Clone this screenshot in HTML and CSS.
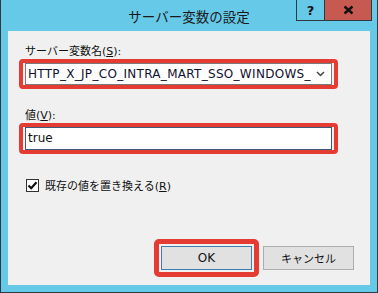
FILE: index.html
```html
<!DOCTYPE html>
<html lang="ja">
<head>
    <meta charset="UTF-8">
    <title>サーバー変数の設定</title>
    <link rel="stylesheet" href="styles.css">
</head>
<body>
    <div class="window">
        <div class="titlebar">
            <span class="title">サーバー変数の設定</span>
            <div class="title-buttons">
                <span class="tbtn help">?</span>
                <span class="tbtn close">
                    <svg width="11" height="10" viewBox="0 0 11 10">
                        <path d="M1.5 1.5 L9.5 8.5 M9.5 1.5 L1.5 8.5" stroke="#111" stroke-width="2.4"/>
                    </svg>
                </span>
            </div>
        </div>

        <div class="content">
            <div class="label label-first">サーバー変数名(<u>S</u>):</div>
            <div class="mark">
                <div class="combo">
                    <span class="combo-text">HTTP_X_JP_CO_INTRA_MART_SSO_WINDOWS_</span>
                    <svg class="chevron" width="9" height="6" viewBox="0 0 9 6">
                        <path d="M1 1 L4.5 4.5 L8 1" stroke="#444" stroke-width="1.5" fill="none"/>
                    </svg>
                </div>
            </div>

            <div class="label label-second">値(<u>V</u>):</div>
            <div class="mark">
                <div class="textbox">true</div>
            </div>

            <div class="check-row">
                <span class="checkbox">
                    <svg width="11" height="11" viewBox="0 0 11 11">
                        <path d="M1.5 5.5 L4.2 8.2 L9.5 2.2" stroke="#111" stroke-width="2.2" fill="none"/>
                    </svg>
                </span>
                <span class="label-text">既存の値を置き換える(<u>R</u>)</span>
            </div>

            <div class="buttons">
                <div class="mark mark-btn">
                    <button class="btn btn-default">OK</button>
                </div>
                <button class="btn btn-ja">キャンセル</button>
            </div>
        </div>
    </div>
</body>
</html>
```

FILE: styles.css
```css
body {
    margin: 0;
    font-family: "DejaVu Sans", "Noto Sans CJK JP", sans-serif;
    font-size: 12px;
    color: #111;
}

.window {
    position: relative;
    width: 378px;
    height: 293px;
    box-sizing: border-box;
    background: #66c9e8;
    border: 1px solid #2e3a40;
    border-top: none;
    padding: 0 7px 7px 7px;
    display: flex;
    flex-direction: column;
}

.titlebar {
    height: 31px;
    flex: none;
    display: flex;
    justify-content: center;
    align-items: center;
}

.title {
    font-family: "Noto Sans CJK JP", sans-serif;
    font-size: 13.5px;
    color: #1a1a1a;
    margin-top: 1px;
}

.title-buttons {
    position: absolute;
    top: 0;
    right: 5px;
    display: flex;
    border: 1px solid #2e3a40;
    border-top: none;
}

.tbtn {
    height: 20px;
    display: flex;
    align-items: center;
    justify-content: center;
}

.help {
    width: 27px;
    border-right: 1px solid #2e3a40;
    font-weight: bold;
    font-size: 13px;
}

.close {
    width: 46px;
    background: #c75a50;
}

.content {
    flex: 1;
    background: #f0f0f0;
    display: flex;
    flex-direction: column;
    padding: 13px 0 0 0;
}

.label {
    font-size: 11px;
    line-height: 15px;
    padding-left: 17px;
}

.label-second {
    margin-top: 19px;
}

.mark {
    margin-left: 11px;
    width: 319px;
    box-sizing: border-box;
    border: 4px solid #e43b32;
    border-radius: 4px;
    padding: 0 2px;
}

.combo {
    height: 22px;
    box-sizing: border-box;
    border: 1px solid #7a7a7a;
    background: #fff;
    display: flex;
    align-items: center;
    padding: 0 6px 0 2px;
}

.combo-text {
    flex: 1;
    overflow: hidden;
    white-space: nowrap;
    letter-spacing: 0.3px;
    color: #101030;
}

.chevron {
    margin-left: 4px;
}

.textbox {
    height: 23px;
    box-sizing: border-box;
    border: 1px solid #3d5a78;
    background: #fff;
    padding-left: 2px;
    line-height: 21px;
}

.check-row {
    margin-top: 23px;
    padding-left: 18px;
    display: flex;
    align-items: center;
    height: 16px;
}

.label-text {
    font-size: 11px;
}

.checkbox {
    width: 13px;
    height: 13px;
    box-sizing: border-box;
    border: 1px solid #333;
    background: #fff;
    display: flex;
    align-items: center;
    justify-content: center;
    margin-right: 6px;
}

.buttons {
    margin-top: auto;
    margin-bottom: 8px;
    padding-right: 16px;
    display: flex;
    justify-content: flex-end;
    align-items: center;
}

.mark-btn {
    width: auto;
    margin-left: 0;
    border-width: 5px;
    border-radius: 5px;
    padding: 2px;
    margin-right: 4px;
}

.btn {
    width: 91px;
    height: 24px;
    border: 1px solid #adadad;
    background: #e1e1e1;
    font-family: "DejaVu Sans", "Noto Sans CJK JP", sans-serif;
    font-size: 12px;
    color: #111;
    padding: 0;
    display: block;
}

.btn-ja {
    font-size: 11px;
}

.btn-default {
    border-color: #3c7fb1;
}
```
